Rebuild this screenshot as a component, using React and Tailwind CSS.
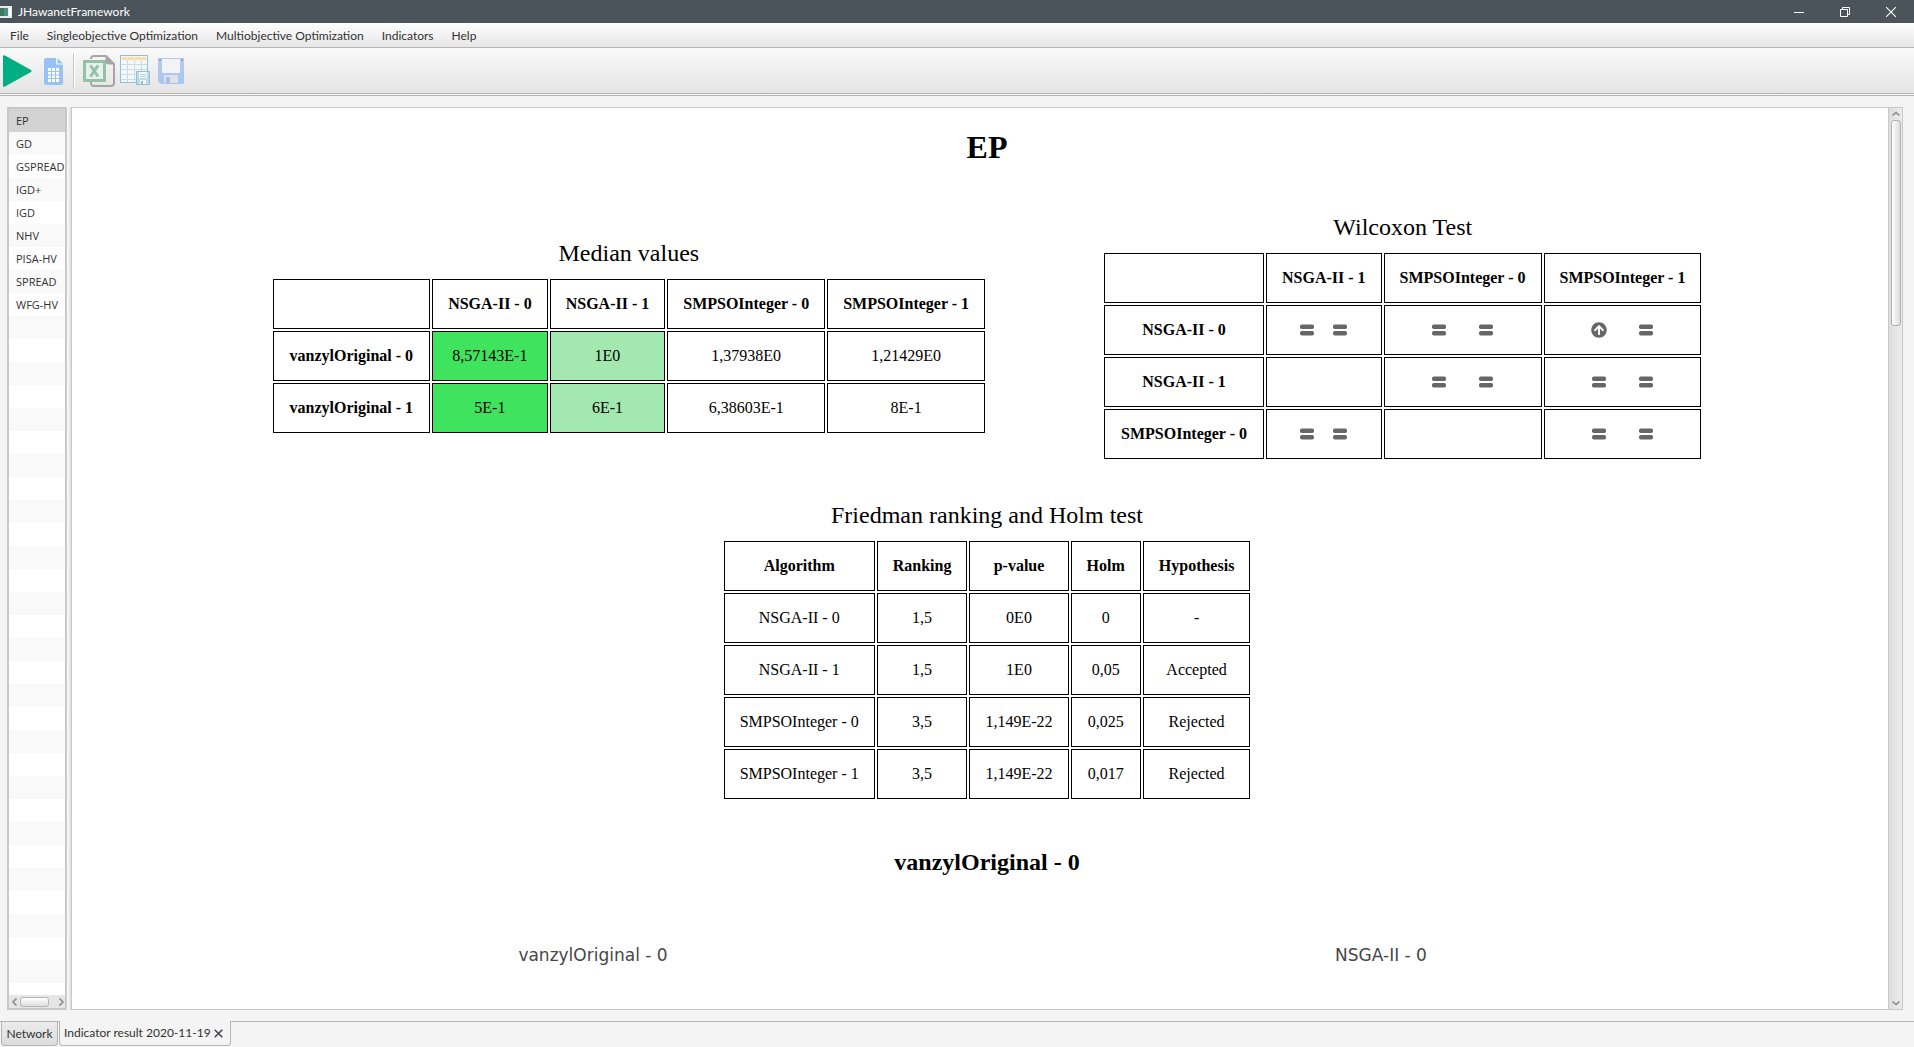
import React from "react";
import { FaArrowCircleUp } from "react-icons/fa";

const menus = ["File", "Singleobjective Optimization", "Multiobjective Optimization", "Indicators", "Help"];
const indicators = ["EP", "GD", "GSPREAD", "IGD+", "IGD", "NHV", "PISA-HV", "SPREAD", "WFG-HV"];

const medianHead = ["", "NSGA-II - 0", "NSGA-II - 1", "SMPSOInteger - 0", "SMPSOInteger - 1"];
const medianRows = [
  ["vanzylOriginal - 0", "8,57143E-1", "1E0", "1,37938E0", "1,21429E0"],
  ["vanzylOriginal - 1", "5E-1", "6E-1", "6,38603E-1", "8E-1"],
];
const medianShade = ["", "bg-[#40e35d]", "bg-[#a3e8ae]", "", ""];

const wilcoxonHead = ["", "NSGA-II - 1", "SMPSOInteger - 0", "SMPSOInteger - 1"];
const wilcoxonRows = [
  ["NSGA-II - 0", "==", "==", "^="],
  ["NSGA-II - 1", "", "==", "=="],
  ["SMPSOInteger - 0", "==", "", "=="],
];

const friedmanHead = ["Algorithm", "Ranking", "p-value", "Holm", "Hypothesis"];
const friedmanRows = [
  ["NSGA-II - 0", "1,5", "0E0", "0", "-"],
  ["NSGA-II - 1", "1,5", "1E0", "0,05", "Accepted"],
  ["SMPSOInteger - 0", "3,5", "1,149E-22", "0,025", "Rejected"],
  ["SMPSOInteger - 1", "3,5", "1,149E-22", "0,017", "Rejected"],
];

const cell = "h-[50px] border border-black px-[15px] text-center";
const rowHead = "h-[50px] border border-black px-4 text-center";

function ResultTable({ caption, head, children }) {
  return (
    <table className="border-separate border-spacing-[2px] text-base whitespace-nowrap">
      <caption className="h-[38px] text-2xl leading-7">{caption}</caption>
      <thead>
        <tr>
          {head.map((h, i) =>
            h ? <th key={i} scope="col" className={cell}>{h}</th> : <td key={i} className={cell} />
          )}
        </tr>
      </thead>
      <tbody>{children}</tbody>
    </table>
  );
}

function EqualsIcon() {
  return (
    <svg width="16" height="16" viewBox="0 0 16 16" fill="currentColor" role="img" aria-label="equal">
      <rect x="1" y="2.500" width="14" height="4.500" rx="1.800" />
      <rect x="1" y="9" width="14" height="4.500" rx="1.800" />
    </svg>
  );
}

function Verdicts({ marks }) {
  if (!marks) return null;
  return (
    <div className="flex justify-evenly text-[#666]">
      {marks.split("").map((m, i) =>
        m === "^" ? <FaArrowCircleUp key={i} aria-label="better" /> : <EqualsIcon key={i} />
      )}
    </div>
  );
}

function Chevron({ d, className }) {
  return (
    <svg viewBox="0 0 8 8" className={className} fill="none" stroke="#8c8c8c" strokeWidth="1.6" aria-hidden="true">
      <path d={d} />
    </svg>
  );
}

function TitleBar() {
  return (
    <header className="flex h-[23px] shrink-0 items-center bg-[#4b545b] text-white">
      <svg className="h-3 w-3" viewBox="0 0 12 12" aria-hidden="true">
        <rect width="12" height="12" fill="#e8eaec" />
        <rect y="2" width="8" height="8" fill="#4f8f86" />
        <rect y="2" width="4" height="8" fill="#3b7a5c" />
        <rect x="9" y="2" width="2" height="8" fill="#fff" />
      </svg>
      <h1 className="ml-1.5 flex-1 text-xs leading-4">JHawanetFramework</h1>
      <div className="flex">
        <button aria-label="Minimize" className="flex h-[21px] w-[46px] items-center justify-center">
          <svg width="10" height="10" viewBox="0 0 10 10" stroke="#fff"><path d="M0 5.5h10" /></svg>
        </button>
        <button aria-label="Restore" className="flex h-[21px] w-[46px] items-center justify-center">
          <svg width="10" height="10" viewBox="0 0 10 10" fill="none" stroke="#fff">
            <path d="M.5 2.5h7v7h-7zM2.5 2.5v-2h7v7h-2" />
          </svg>
        </button>
        <button aria-label="Close" className="flex h-[21px] w-[46px] items-center justify-center">
          <svg width="10" height="10" viewBox="0 0 10 10" stroke="#fff" strokeWidth="1.1"><path d="M0 0l10 10M10 0L0 10" /></svg>
        </button>
      </div>
    </header>
  );
}

function ToolBar() {
  return (
    <div className="flex h-[46px] shrink-0 items-center border-b border-[#b5b5b5] bg-linear-to-b from-[#fafafa] to-[#e4e4e4]">
      <button aria-label="Run">
        <svg width="34" height="34" viewBox="0 0 34 34">
          <path d="M3 2.5Q3 .5 5 1.5L31 16q1.500 1 0 2L5 32.500Q3 33.500 3 31.500z" fill="#00ae81" />
        </svg>
      </button>
      <button aria-label="Report" className="ml-[9px]">
        <svg width="22" height="30" viewBox="0 0 22 30">
          <path d="M3 2h10v6.500h7V27q0 2-2 2H3q-2 0-2-2V4q0-2 2-2z" fill="#98c1f7" />
          <path d="M14.500 2l5.500 5.500h-5.500z" fill="#98c1f7" />
          <path d="M5 12h11v14H5z" fill="#fff" />
          <path d="M5 15.500h11M5 19h11M5 22.500h11M8.500 12v14M12.500 12v14" stroke="#98c1f7" strokeWidth="1" />
        </svg>
      </button>
      <span className="ml-2 h-9 w-0.5 border-l border-[#c8c8c8] bg-white" />
      <button aria-label="Export to Excel" className="ml-2">
        <svg width="33" height="34" viewBox="0 0 33 34">
          <path d="M8 5q0-3 3-3h12l8 8v19q0 3-3 3H11q-3 0-3-3v-2" fill="none" stroke="#a6a6a6" strokeWidth="2" />
          <path d="M22.500 1l9.500 9.500h-6q-3.500 0-3.500-3.500z" fill="#a6a6a6" />
          <rect x="1.500" y="7.500" width="20" height="19" fill="#e9efeb" stroke="#93c2a8" strokeWidth="3" />
          <path d="M7.500 11.500l7.500 11M15 11.500l-7.500 11" stroke="#93c2a8" strokeWidth="3" />
        </svg>
      </button>
      <button aria-label="Save table" className="ml-[3px]">
        <svg width="32" height="34" viewBox="0 0 32 34">
          <rect x="1.500" y="1.500" width="27" height="27" fill="#f4f7f8" stroke="#8fc0d8" />
          <path d="M3 3h24v3H3z" fill="#fbdb9f" />
          <path d="M2 10.500h26M2 15.500h26M2 20.500h26M2 25.500h26M8.500 6v22M15.500 6v22M22.500 6v22" stroke="#c9dbe5" />
          <path d="M8.500 3v3M15.500 3v3M22.500 3v3" stroke="#fdebc8" />
          <rect x="17.500" y="17.500" width="13" height="13" fill="#bcdcec" stroke="#8fc0d8" />
          <path d="M20 18h8v6h-8zM21 26h6v4h-6z" fill="#f6f6f6" />
          <path d="M21 20.500h6M21 22.500h6" stroke="#c4d2d8" />
          <path d="M22 27h2v3h-2z" fill="#8fc0d8" />
        </svg>
      </button>
      <button aria-label="Save" className="ml-1.5">
        <svg width="28" height="28" viewBox="0 0 28 28">
          <defs>
            <linearGradient id="disk" x1="0" y1="0" x2="0" y2="1">
              <stop offset="0" stopColor="#b9c9e8" />
              <stop offset="1" stopColor="#a8c6f4" />
            </linearGradient>
          </defs>
          <path d="M1 1h25q1 0 1 1v24q0 1-1 1H4l-3-3V1z" fill="url(#disk)" />
          <path d="M2 2h2v2H2zM24 2h2v2h-2z" fill="#8ea6cf" />
          <rect x="5" y="2" width="18" height="14" rx="1" fill="#f2f3f7" />
          <path d="M7 18h14v8H7z" fill="#e2e2e6" />
          <path d="M9 20h4v6H9z" fill="#a5c0ec" />
        </svg>
      </button>
    </div>
  );
}

function Sidebar() {
  return (
    <nav aria-label="Indicators" className="flex w-[60px] shrink-0 flex-col border-2 border-[#c8c8c8]">
      <ul className="min-h-0 flex-1 overflow-hidden bg-[repeating-linear-gradient(#fff_0_23px,#f9f9f9_23px_46px)] font-['Open_Sans','Segoe_UI',sans-serif]">
        {indicators.map((name, i) => (
          <li key={name} className={i === 0 ? "bg-[#d3d3d3]" : ""}>
            <button className="block h-[23px] w-full pl-[7px] text-left text-[11px] leading-[23px] whitespace-nowrap">
              {name}
            </button>
          </li>
        ))}
      </ul>
      <div className="flex h-[13px] shrink-0 items-center bg-[#e6e6e6] pl-0.5">
        <Chevron d="M5.500 0.500L2 4l3.500 3.500" className="h-2 w-2" />
        <span className="ml-px h-[10px] w-[29px] rounded-[3px] border border-[#b5b5b5] bg-linear-to-b from-white to-[#dedede]" />
        <Chevron d="M2.500 0.500L6 4 2.500 7.500" className="ml-auto h-2 w-2" />
      </div>
    </nav>
  );
}

function Report() {
  return (
    <main className="relative min-w-0 flex-1 overflow-hidden border-y border-r border-[#c8c8c8] bg-white font-['Liberation_Serif','Times_New_Roman',serif] text-black">
      <div className="flex flex-col items-center px-2 pt-[21px]">
        <h2 className="text-[32px] leading-9 font-bold">EP</h2>
        <div className="mt-12 flex items-center justify-center gap-[115px]">
          <ResultTable caption="Median values" head={medianHead}>
            {medianRows.map((row) => (
              <tr key={row[0]}>
                {row.map((v, i) =>
                  i === 0 ? (
                    <th key={i} scope="row" className={rowHead}>{v}</th>
                  ) : (
                    <td key={i} className={`${cell} ${medianShade[i]}`}>{v}</td>
                  )
                )}
              </tr>
            ))}
          </ResultTable>
          <ResultTable caption="Wilcoxon Test" head={wilcoxonHead}>
            {wilcoxonRows.map((row) => (
              <tr key={row[0]}>
                {row.map((v, i) =>
                  i === 0 ? (
                    <th key={i} scope="row" className={rowHead}>{v}</th>
                  ) : (
                    <td key={i} className={cell}><Verdicts marks={v} /></td>
                  )
                )}
              </tr>
            ))}
          </ResultTable>
        </div>
        <div className="mt-10">
          <ResultTable caption="Friedman ranking and Holm test" head={friedmanHead}>
            {friedmanRows.map((row) => (
              <tr key={row[0]}>
                {row.map((v, i) => <td key={i} className={cell}>{v}</td>)}
              </tr>
            ))}
          </ResultTable>
        </div>
        <h3 className="mt-[47px] text-2xl leading-7 font-bold">vanzylOriginal - 0</h3>
        <div className="mt-[67px] flex w-full justify-center font-['DejaVu_Sans',Verdana,sans-serif] text-[17px] leading-6 text-[#474747]">
          <p className="w-[788px] text-center">vanzylOriginal - 0</p>
          <p className="w-[788px] text-center">NSGA-II - 0</p>
        </div>
      </div>
      <div className="absolute inset-y-0 right-0 flex w-[14px] flex-col items-center border-l border-[#c8c8c8] bg-linear-to-r from-[#dedede] to-[#ededed]">
        <Chevron d="M0.500 5.500L4 2.500l3.500 3" className="my-0.5 h-2 w-2 shrink-0" />
        <span className="h-[206px] w-[10px] rounded-[3px] border border-[#b0b0b0] bg-linear-to-r from-white to-[#dcdcdc]" />
        <Chevron d="M0.500 2.500L4 5.500l3.500-3" className="mt-auto mb-0.5 h-2 w-2 shrink-0" />
      </div>
    </main>
  );
}

export default function App() {
  return (
    <div className="flex h-screen flex-col overflow-hidden bg-[#f4f4f4] font-['Lato','Segoe_UI',sans-serif] text-[#323232]">
      <TitleBar />
      <nav aria-label="Main menu" className="flex h-[25px] shrink-0 items-center border-b border-[#b5b5b5] bg-linear-to-b from-white to-[#e6e6e6] pt-0.5 pr-0.5 pl-px">
        {menus.map((m) => (
          <button key={m} className="px-[9px] text-xs leading-[22px] whitespace-nowrap">{m}</button>
        ))}
      </nav>
      <ToolBar />
      <div className="mt-px flex min-h-0 flex-1 border-t border-[#b5b5b5] pt-[11px] pr-[11px] pb-[11px] pl-[7px]">
        <Sidebar />
        <div className="w-[5px] shrink-0 border-r border-[#c8c8c8] bg-linear-to-r from-white to-[#dcdcdc]" />
        <Report />
      </div>
      <div role="tablist" className="flex h-[26px] shrink-0 border-t border-[#b5b5b5] text-xs">
        <button role="tab" aria-selected="false" className="ml-px h-6 w-[57px] rounded-b-sm border border-t-0 border-[#b5b5b5] bg-linear-to-b from-[#ececec] to-[#dcdcdc] text-center">
          Network
        </button>
        <div className="-mt-px ml-px flex h-[25px] items-center gap-[3px] rounded-b-sm border border-t-0 border-[#b5b5b5] bg-[#f4f4f4] pr-[7px] pl-1">
          <button role="tab" aria-selected="true" className="whitespace-nowrap">Indicator result 2020-11-19</button>
          <button aria-label="Close tab">
            <svg width="9" height="9" viewBox="0 0 9 9" stroke="#4a4a4a" strokeWidth="1.600"><path d="M.7.7l7.600 7.600M8.300.7L.7 8.300" /></svg>
          </button>
        </div>
      </div>
    </div>
  );
}
